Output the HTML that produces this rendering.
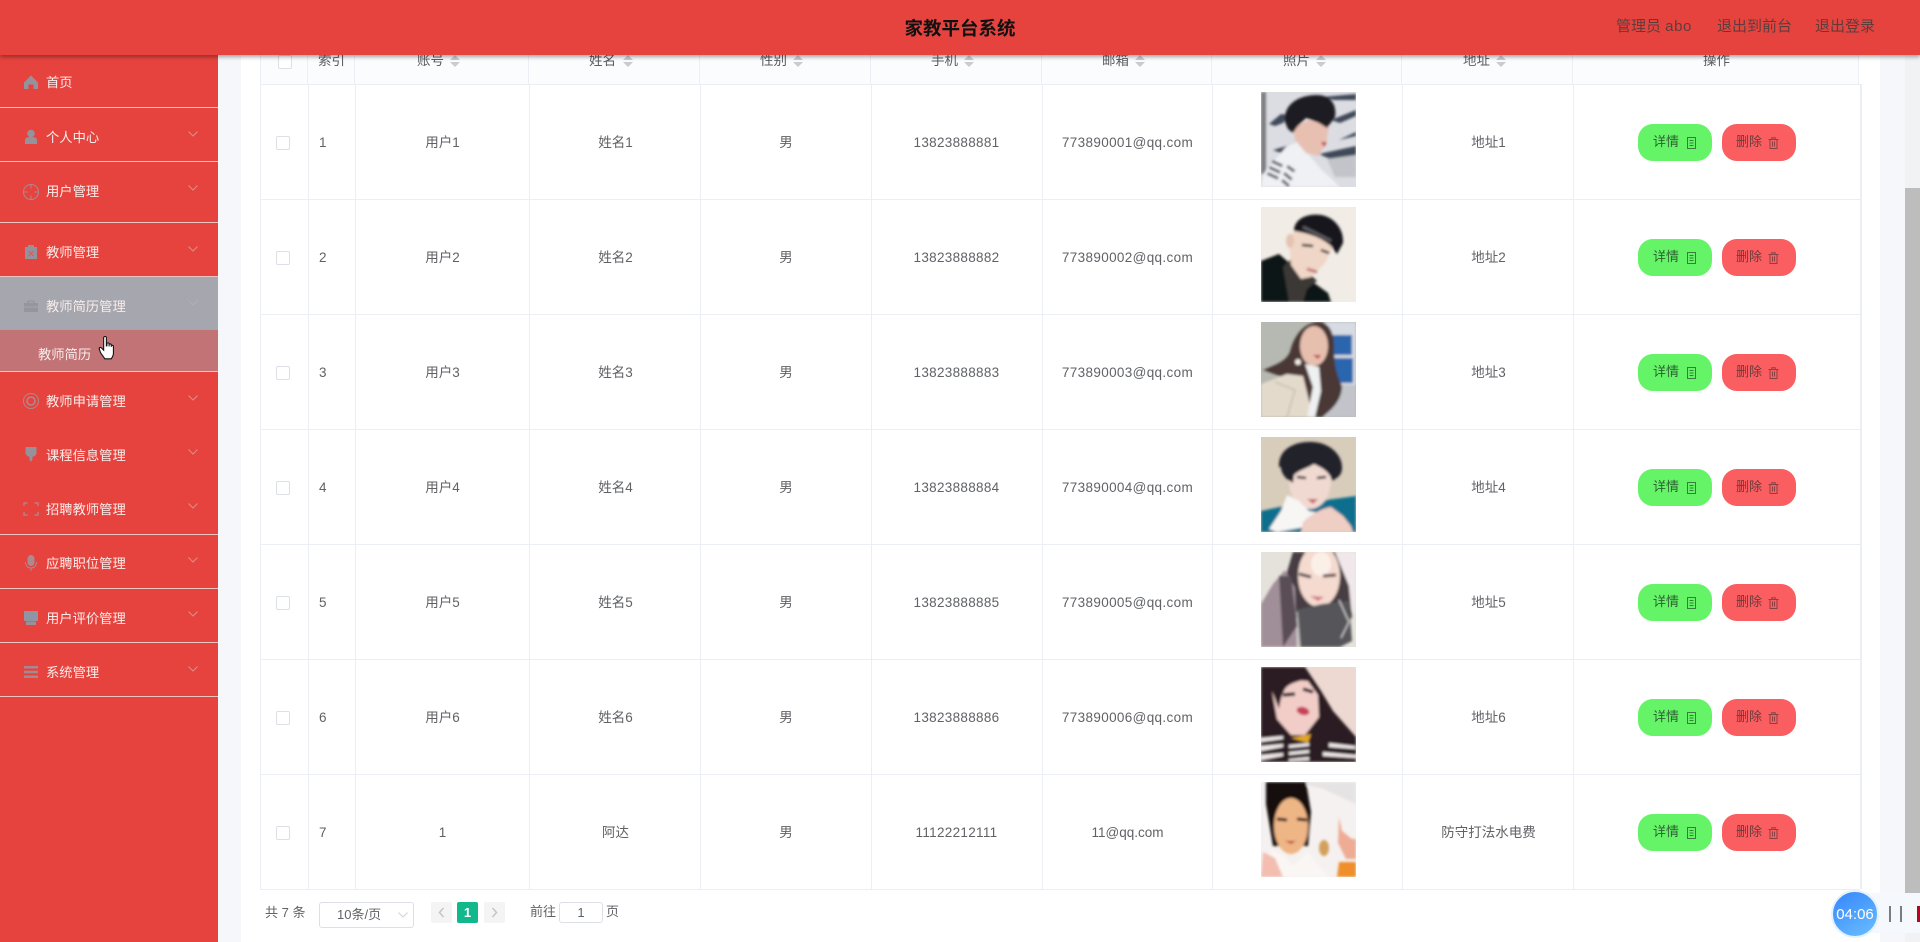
<!DOCTYPE html>
<html lang="zh"><head><meta charset="utf-8"><title>家教平台系统</title>
<style>
*{box-sizing:border-box}
html,body{margin:0;padding:0;width:1920px;height:942px;overflow:hidden;background:#f5f7fa;font-family:"Liberation Sans","Noto Sans CJK SC",sans-serif;font-size:13.5px;color:#606266}
.abs,.hl,.vl,.m,.cv,.r,.c,.th,.ck,.b,.ph,.pg{position:absolute}
#hd{position:absolute;left:0;top:0;width:1920px;height:55px;background:#e7433e;box-shadow:0 2px 4px rgba(0,0,0,.35);z-index:10}
#hd .t{position:absolute;left:760px;width:400px;top:15px;line-height:28px;text-align:center;font-size:18.5px;font-weight:bold;color:#111}
#hd a{position:absolute;top:16px;line-height:22px;font-size:15px;color:#5f3c3c;white-space:nowrap}
#sb{position:absolute;left:0;top:55px;width:218px;height:887px;background:#e7433e;z-index:5}
.m{left:46px;margin-top:1px;font-size:13.3px;line-height:20px;color:#f8ecea;white-space:nowrap}
.sl{position:absolute;left:0;width:218px;height:1px;background:#ecc4c0}
.cv{left:188px;margin-top:-1px;width:10px;height:6px}
.ic{position:absolute;left:23px;width:16px;height:16px}
#main{position:absolute;left:241px;top:0;width:1639px;height:942px;background:#fff}
.hl{left:260px;width:1600px;height:1px;background:#ebeef5}
.vl{width:1px;top:84px;height:805px;background:#ebeef5}
.th{top:49px;line-height:24px;white-space:nowrap;color:#5a5c61;font-size:13.5px}
.r{left:260px;width:1600px;height:114px}
.c{top:0;height:114px;line-height:115px;text-align:center;white-space:nowrap}
.n{letter-spacing:.3px}
.ck{width:14px;height:14px;border:1px solid #dcdfe6;border-radius:2px;background:#fff}
.ph{left:1001px;top:7px;width:95px;height:95px;display:block}
.b{top:38px;margin-top:1px;width:74px;height:37px;border-radius:15px;line-height:36px;font-size:13px;padding-left:15px;white-space:nowrap}
.g{left:1378px;background-color:#65f467;color:#2e5f35}
.d{left:1462px;background-color:#fa5e60;color:#6d3a3c;padding-left:14px}
.b svg{position:absolute;top:13px;width:11px;height:12px;opacity:.8}
.g svg{left:48px}.d svg{left:46px}
.pg{font-size:13px;line-height:20px;color:#606266;white-space:nowrap}
.pb{position:absolute;top:902px;width:21px;height:21px;background:#f4f4f5;border-radius:2px}
</style></head><body>
<svg width="0" height="0" style="position:absolute">
<defs>
<filter id="bl" x="-5%" y="-5%" width="110%" height="110%"><feGaussianBlur stdDeviation="1.3"/></filter>
<symbol id="doc" viewBox="0 0 11 12"><g fill="none" stroke="currentColor" stroke-width="1"><rect x="1.500" y=".5" width="8" height="11"/><path d="M3.500 3.500h4M3.500 6h4M3.500 8.500h4"/></g></symbol>
<symbol id="del" viewBox="0 0 11 12"><g fill="none" stroke="currentColor" stroke-width="1"><path d="M.5 2.500h10M3.800 2.500V.7h3.400v1.800M2 2.500v9h7v-9M4.500 4.500v5M6.500 4.500v5"/></g></symbol>
<symbol id="chev" viewBox="0 0 10 6"><path d="M.5.5L5 5 9.500.5" fill="none" stroke="#d98e88" stroke-width="1"/></symbol>
<symbol id="srt" viewBox="0 0 10 12"><path d="M5 0l5 5H0zM0 7h10l-5 5z" fill="#c8cbd2"/></symbol>
</defs></svg>

<div id="main"></div>

<!-- table header -->
<div class="abs" style="left:260px;top:55px;width:1598px;height:29px;background:#fbfcfd"></div>
<div class="hl" style="top:84px"></div>
<div class="vl" style="left:260px;top:55px;height:834px"></div>
<div class="vl" style="left:307px;top:55px;height:29px"></div>
<div class="vl" style="left:354px;top:55px;height:29px"></div>
<div class="vl" style="left:528px;top:55px;height:29px"></div>
<div class="vl" style="left:699px;top:55px;height:29px"></div>
<div class="vl" style="left:870px;top:55px;height:29px"></div>
<div class="vl" style="left:1041px;top:55px;height:29px"></div>
<div class="vl" style="left:1211px;top:55px;height:29px"></div>
<div class="vl" style="left:1401px;top:55px;height:29px"></div>
<div class="vl" style="left:1572px;top:55px;height:29px"></div>
<div class="vl" style="left:1858px;top:55px;height:29px"></div>
<div class="vl" style="left:308px"></div><div class="vl" style="left:355px"></div><div class="vl" style="left:529px"></div><div class="vl" style="left:700px"></div><div class="vl" style="left:871px"></div><div class="vl" style="left:1042px"></div><div class="vl" style="left:1212px"></div><div class="vl" style="left:1402px"></div><div class="vl" style="left:1573px"></div><div class="vl" style="left:1860px;width:2px"></div>
<div class="hl" style="top:199px"></div><div class="hl" style="top:314px"></div><div class="hl" style="top:429px"></div><div class="hl" style="top:544px"></div><div class="hl" style="top:659px"></div><div class="hl" style="top:774px"></div><div class="hl" style="top:889px"></div>

<div class="ck" style="left:278px;top:55px"></div>
<div class="th" style="left:318px">索引</div>
<div class="th" style="left:417px">账号</div><svg class="abs" style="left:450px;top:55px" width="10" height="12"><use href="#srt"/></svg>
<div class="th" style="left:589px">姓名</div><svg class="abs" style="left:623px;top:55px" width="10" height="12"><use href="#srt"/></svg>
<div class="th" style="left:760px">性别</div><svg class="abs" style="left:793px;top:55px" width="10" height="12"><use href="#srt"/></svg>
<div class="th" style="left:931px">手机</div><svg class="abs" style="left:964px;top:55px" width="10" height="12"><use href="#srt"/></svg>
<div class="th" style="left:1102px">邮箱</div><svg class="abs" style="left:1135px;top:55px" width="10" height="12"><use href="#srt"/></svg>
<div class="th" style="left:1283px">照片</div><svg class="abs" style="left:1316px;top:55px" width="10" height="12"><use href="#srt"/></svg>
<div class="th" style="left:1463px">地址</div><svg class="abs" style="left:1496px;top:55px" width="10" height="12"><use href="#srt"/></svg>
<div class="th" style="left:1703px">操作</div>

<!-- rows -->
<div class="r" style="top:85px"><div class="ck" style="left:16px;top:51px"></div><div class="c" style="left:59px">1</div><div class="c" style="left:95px;width:175px">用户1</div><div class="c" style="left:270px;width:171px">姓名1</div><div class="c" style="left:441px;width:170px">男</div><div class="c n" style="left:611px;width:171px">13823888881</div><div class="c" style="left:782px;width:171px;letter-spacing:.35px">773890001@qq.com</div>
<svg class="ph" viewBox="0 0 95 95"><rect width="95" height="95" fill="#dcdde3"/><g filter="url(#bl)"><rect width="5" height="82" fill="#7c7d80"/><path d="M8 32l12-10 8 1-6 8-8 3zM12 58l14-4 6 2-12 5zM60 5l35-3v6l-22 0zM70 28l25-10v6l-16 7zM78 48l17-8v4zM58 62l37-8v10l-24 4z" fill="#3f4858"/><path d="M95 85H74l-8-18 29-4z" fill="#c3c4c9"/><path d="M0 95l3-14 22-26 12-5 22 26 20 19z" fill="#eff1f4"/><path d="M32 36l16-8 20 6-3 18-8 12-12-3-11-13z" fill="#e8c0b2"/><path d="M24 30C22 12 38 3 56 3c14 0 20 10 18 22l-8 11-8-5-13-5-9 9-4 6-5-4z" fill="#1e1b20"/><path d="M60 50l6 0-3 5z" fill="#c54a4a"/><g fill="#5f6169"><rect x="12" y="68" width="11" height="3" transform="rotate(25 12 68)"/><rect x="9" y="74" width="12" height="3" transform="rotate(25 9 74)"/><rect x="7" y="80" width="12" height="3" transform="rotate(25 7 80)"/><rect x="27" y="73" width="9" height="3" transform="rotate(35 27 73)"/><rect x="24" y="80" width="10" height="3" transform="rotate(40 24 80)"/><rect x="22" y="87" width="9" height="3" transform="rotate(40 22 87)"/></g></g></svg>
<div class="c" style="left:1143px;width:171px">地址1</div><div class="b g">详情<svg><use href="#doc"/></svg></div><div class="b d">删除<svg><use href="#del"/></svg></div></div>

<div class="r" style="top:200px"><div class="ck" style="left:16px;top:51px"></div><div class="c" style="left:59px">2</div><div class="c" style="left:95px;width:175px">用户2</div><div class="c" style="left:270px;width:171px">姓名2</div><div class="c" style="left:441px;width:170px">男</div><div class="c n" style="left:611px;width:171px">13823888882</div><div class="c" style="left:782px;width:171px;letter-spacing:.35px">773890002@qq.com</div>
<svg class="ph" viewBox="0 0 95 95"><rect width="95" height="95" fill="#f1ece5"/><g filter="url(#bl)"><path d="M0 54l18-7 24 21 25 18 3 9H0z" fill="#111214"/><path d="M22 60l10-10 24 24-10 8-4 13H28z" fill="#3a3936"/><path d="M28 34l6-12 24 0 14 18-8 16-14 14-10 2-10-14z" fill="#efd6c6"/><ellipse cx="29" cy="34" rx="4" ry="7" fill="#e6c3b1"/><path d="M33 24C33 12 46 6 60 8c13 2 23 14 22 28l-6 11-6-8C60 30 46 26 33 24z" fill="#17171a"/><path d="M42 20l28 14" stroke="#5a5a60" stroke-width="3"/><path d="M41 38l11 1M60 43l8 3" stroke="#2b2424" stroke-width="2.500"/><path d="M46 62l10 3" stroke="#c07a70" stroke-width="3"/></g></svg>
<div class="c" style="left:1143px;width:171px">地址2</div><div class="b g">详情<svg><use href="#doc"/></svg></div><div class="b d">删除<svg><use href="#del"/></svg></div></div>

<div class="r" style="top:315px"><div class="ck" style="left:16px;top:51px"></div><div class="c" style="left:59px">3</div><div class="c" style="left:95px;width:175px">用户3</div><div class="c" style="left:270px;width:171px">姓名3</div><div class="c" style="left:441px;width:170px">男</div><div class="c n" style="left:611px;width:171px">13823888883</div><div class="c" style="left:782px;width:171px;letter-spacing:.35px">773890003@qq.com</div>
<svg class="ph" viewBox="0 0 95 95"><rect width="95" height="95" fill="#b5b9b1"/><g filter="url(#bl)"><rect x="64" width="31" height="95" fill="#d7dbe3"/><rect x="72" y="13" width="19" height="20" fill="#2a66ad"/><rect x="72" y="36" width="20" height="25" fill="#2a66ad"/><rect x="64" y="63" width="31" height="32" fill="#c2c4ca"/><path d="M2 48c14-6 22-8 27-18 3-14 13-30 29-30 12 0 16 16 15 26 0 14 2 26 8 38 0 14-10 24-20 31H40L30 58z" fill="#483836"/><ellipse cx="53" cy="24" rx="14" ry="20" fill="#e6bfae"/><path d="M52 33l8 0-3 4z" fill="#bf3b3c"/><path d="M0 62l26-10 16 2 10 41H0z" fill="#e4dacb"/><path d="M14 60l20 8-8 27" stroke="#cfc5b4" stroke-width="2" fill="none"/><path d="M44 42l14 3 2 24-6 26H46l6-30z" fill="#eef0f1"/><circle cx="37" cy="40" r="3" fill="#f4ece4"/></g></svg>
<div class="c" style="left:1143px;width:171px">地址3</div><div class="b g">详情<svg><use href="#doc"/></svg></div><div class="b d">删除<svg><use href="#del"/></svg></div></div>

<div class="r" style="top:430px"><div class="ck" style="left:16px;top:51px"></div><div class="c" style="left:59px">4</div><div class="c" style="left:95px;width:175px">用户4</div><div class="c" style="left:270px;width:171px">姓名4</div><div class="c" style="left:441px;width:170px">男</div><div class="c n" style="left:611px;width:171px">13823888884</div><div class="c" style="left:782px;width:171px;letter-spacing:.35px">773890004@qq.com</div>
<svg class="ph" viewBox="0 0 95 95"><rect width="95" height="95" fill="#d8ccbb"/><g filter="url(#bl)"><path d="M0 74l28-6 67-9v36H0z" fill="#0c6e8d"/><ellipse cx="49" cy="44" rx="21" ry="28" fill="#f0d9d1"/><path d="M26 58l12 6 10 10 10 2-8 13-34 6-8-3 12-18z" fill="#f7f6f5"/><path d="M18 30C17 12 34 4 52 5c18 1 30 14 29 27-1 8-6 9-10 12-2-10-12-14-18-17-6 4-15 6-20 11l-1 8-6-4c-3-3-6-7-6-12z" fill="#202129"/><path d="M36 40l9 1M56 41l9-1" stroke="#3a2a2a" stroke-width="2.500"/><path d="M46 62l11 0-5 5z" fill="#c96b6e"/><path d="M42 85c8-8 20-14 28-15l12 9 8 10 2 6H40z" fill="#efcec4"/></g></svg>
<div class="c" style="left:1143px;width:171px">地址4</div><div class="b g">详情<svg><use href="#doc"/></svg></div><div class="b d">删除<svg><use href="#del"/></svg></div></div>

<div class="r" style="top:545px"><div class="ck" style="left:16px;top:51px"></div><div class="c" style="left:59px">5</div><div class="c" style="left:95px;width:175px">用户5</div><div class="c" style="left:270px;width:171px">姓名5</div><div class="c" style="left:441px;width:170px">男</div><div class="c n" style="left:611px;width:171px">13823888885</div><div class="c" style="left:782px;width:171px;letter-spacing:.35px">773890005@qq.com</div>
<svg class="ph" viewBox="0 0 95 95"><rect width="95" height="95" fill="#e4e2da"/><g filter="url(#bl)"><path d="M70 0h25v62l-10-10-5-26z" fill="#f0e8ea"/><path d="M32 0h42l14 34 3 32H30L20 40z" fill="#473c42"/><path d="M0 95V52l12-20 12-14 10 18 2 59z" fill="#a08e99"/><path d="M18 24l12 0 6 50-14 21z" fill="#5a4e56"/><ellipse cx="58" cy="24" rx="21" ry="31" fill="#f4dacf"/><ellipse cx="60" cy="12" rx="10" ry="12" fill="#fbf0e8"/><path d="M38 22l12 3M62 24l13-1" stroke="#5a4a4a" stroke-width="3"/><path d="M49 44l14 1-6 4z" fill="#d57882"/><path d="M35 58l26-6 27-3 3 40-12 6H38z" fill="#56565a"/><path d="M78 48l10 22-8 16" stroke="#e8e8e8" stroke-width="1" fill="none"/><path d="M36 60l3 35" stroke="#d8d8d8" stroke-width="1"/></g></svg>
<div class="c" style="left:1143px;width:171px">地址5</div><div class="b g">详情<svg><use href="#doc"/></svg></div><div class="b d">删除<svg><use href="#del"/></svg></div></div>

<div class="r" style="top:660px"><div class="ck" style="left:16px;top:51px"></div><div class="c" style="left:59px">6</div><div class="c" style="left:95px;width:175px">用户6</div><div class="c" style="left:270px;width:171px">姓名6</div><div class="c" style="left:441px;width:170px">男</div><div class="c n" style="left:611px;width:171px">13823888886</div><div class="c" style="left:782px;width:171px;letter-spacing:.35px">773890006@qq.com</div>
<svg class="ph" viewBox="0 0 95 95"><rect width="95" height="95" fill="#edd9d2"/><g filter="url(#bl)"><path d="M0 0h44l16 24 12 20 23 26v25H0z" fill="#2b1a20"/><path d="M11 24l10-12 26 2 10 14 1 22-14 18-14 0-14-16z" fill="#f2cdc8"/><path d="M11 24C18 6 34 2 46 12c-8 2-18 4-22 10-3 5-5 12-6 20z" fill="#2b1a20"/><path d="M22 28l12-1M42 22l10 3" stroke="#2b1a20" stroke-width="3.500"/><ellipse cx="42" cy="44" rx="6.500" ry="4" fill="#c7405a" transform="rotate(15 42 44)"/><path d="M30 71l20-4-3 9z" fill="#e3a726"/><g fill="#f2ecec"><path d="M0 71l22-2v3L0 75zM0 79l22-2v3L0 84zM0 88l22-2v3L0 93zM28 78l20-2v3l-20 2zM28 85l20-2v3l-20 2zM28 92l20-2v3l-20 1zM68 76l26 3v3l-26-2zM62 85l33 3v3l-33-2z"/></g></g></svg>
<div class="c" style="left:1143px;width:171px">地址6</div><div class="b g">详情<svg><use href="#doc"/></svg></div><div class="b d">删除<svg><use href="#del"/></svg></div></div>

<div class="r" style="top:775px"><div class="ck" style="left:16px;top:51px"></div><div class="c" style="left:59px">7</div><div class="c" style="left:95px;width:175px">1</div><div class="c" style="left:270px;width:171px">阿达</div><div class="c" style="left:441px;width:170px">男</div><div class="c n" style="left:611px;width:171px">11122212111</div><div class="c" style="left:782px;width:171px">11@qq.com</div>
<svg class="ph" viewBox="0 0 95 95"><rect width="95" height="95" fill="#f5f1f0"/><g filter="url(#bl)"><path d="M30 0h65v22L60 6z" fill="#e6e3e4"/><path d="M5 0h40l5 30-3 34H12L5 22z" fill="#120e10"/><ellipse cx="30" cy="44" rx="17" ry="28" fill="#eeb585"/><path d="M16 37l10 1M36 37l10 1" stroke="#2a1414" stroke-width="3"/><path d="M24 59l11 0-5 3z" fill="#c3384a"/><path d="M10 68l14 6 8 10 14-14 22 25H8z" fill="#faf6f3"/><path d="M2 70l12 6 8 19H0z" fill="#f3bdb0"/><ellipse cx="63" cy="66" rx="5" ry="8" fill="#d3a05c"/><path d="M78 35l3 14 10 8 4 0v20H85l-8-16z" fill="#eeac94"/><path d="M78 80h17v15H76z" fill="#ee8f2c"/></g></svg>
<div class="c" style="left:1143px;width:171px">防守打法水电费</div><div class="b g">详情<svg><use href="#doc"/></svg></div><div class="b d">删除<svg><use href="#del"/></svg></div></div>

<!-- pagination -->
<div class="pg" style="left:265px;top:903px">共 7 条</div>
<div class="abs" style="left:319px;top:902px;width:95px;height:26px;border:1px solid #dcdfe6;border-radius:3px;background:#fff"></div>
<div class="pg" style="left:337px;top:905px;color:#606266">10条/页</div>
<svg class="abs" style="left:398px;top:912px" width="10" height="6"><path d="M.5.5L5 5 9.500.5" fill="none" stroke="#d0d3d9"/></svg>
<div class="pb" style="left:431px"><svg width="21" height="21"><path d="M12.500 6l-4 4.500 4 4.500" fill="none" stroke="#c0c4cc" stroke-width="1.500"/></svg></div>
<div class="pb" style="left:457px;background:#10b88c;color:#fff;text-align:center;font-weight:bold;font-size:13px;line-height:21px">1</div>
<div class="pb" style="left:484px"><svg width="21" height="21"><path d="M8.500 6l4 4.500-4 4.500" fill="none" stroke="#c0c4cc" stroke-width="1.500"/></svg></div>
<div class="pg" style="left:530px;top:902px">前往</div>
<div class="abs" style="left:559px;top:902px;width:44px;height:21px;border:1px solid #dcdfe6;border-radius:3px;background:#fff;text-align:center;line-height:19px;font-size:13px">1</div>
<div class="pg" style="left:606px;top:902px">页</div>

<!-- scrollbar -->
<div class="abs" style="left:1905px;top:55px;width:15px;height:887px;background:#f1f2f4"></div>
<div class="abs" style="left:1905px;top:188px;width:15px;height:710px;background:#bdbdbd"></div>

<!-- sidebar -->
<div id="sb">
<div class="abs" style="left:0;top:221px;width:218px;height:54px;background:#a6a6ae"></div>
<div class="abs" style="left:0;top:275px;width:218px;height:41px;background:#c27376"></div>
<div class="sl" style="top:52px"></div><div class="sl" style="top:106px"></div><div class="sl" style="top:167px"></div><div class="sl" style="top:221px"></div><div class="sl" style="top:316px"></div><div class="sl" style="top:479px"></div><div class="sl" style="top:533px"></div><div class="sl" style="top:587px"></div><div class="sl" style="top:641px"></div>

<div class="m" style="top:17px">首页</div>
<div class="m" style="top:72px">个人中心</div>
<div class="m" style="top:126px">用户管理</div>
<div class="m" style="top:187px">教师管理</div>
<div class="m" style="top:241px">教师简历管理</div>
<div class="m" style="left:38px;top:289px">教师简历</div>
<div class="m" style="top:336px">教师申请管理</div>
<div class="m" style="top:390px">课程信息管理</div>
<div class="m" style="top:444px">招聘教师管理</div>
<div class="m" style="top:498px">应聘职位管理</div>
<div class="m" style="top:553px">用户评价管理</div>
<div class="m" style="top:607px">系统管理</div>

<svg class="cv" style="top:77px"><use href="#chev"/></svg>
<svg class="cv" style="top:131px"><use href="#chev"/></svg>
<svg class="cv" style="top:192px"><use href="#chev"/></svg>
<svg class="cv" style="top:246px"><path d="M.5.5L5 5 9.500.5" fill="none" stroke="#b0b0b7"/></svg>
<svg class="cv" style="top:341px"><use href="#chev"/></svg>
<svg class="cv" style="top:395px"><use href="#chev"/></svg>
<svg class="cv" style="top:449px"><use href="#chev"/></svg>
<svg class="cv" style="top:503px"><use href="#chev"/></svg>
<svg class="cv" style="top:557px"><use href="#chev"/></svg>
<svg class="cv" style="top:612px"><use href="#chev"/></svg>

<!-- icons -->
<svg class="ic" style="top:19px" viewBox="0 0 16 16"><path d="M8 1.500L1 8.500v6.500h4.500v-4.500h5V15H15V8.500z" fill="#96929c"/></svg>
<svg class="ic" style="top:74px" viewBox="0 0 16 16"><circle cx="8" cy="4.500" r="3.800" fill="#96929c"/><path d="M2 15v-4c0-2 2-3 6-3s6 1 6 3v4z" fill="#96929c"/></svg>
<svg class="ic" style="left:22px;top:128px;width:18px;height:18px" viewBox="0 0 18 18"><g fill="none" stroke="#ac8a8f" stroke-width="1"><circle cx="9" cy="9" r="7.500"/><path d="M9 1.500v4M9 12.500v4M1.500 9h4M12.500 9h4"/></g></svg>
<svg class="ic" style="top:189px" viewBox="0 0 16 16"><path d="M2 3h3V1h6v2h3v12H2z" fill="#96929c"/><path d="M5.500 7l5 5M10.500 7l-5 5" stroke="#d85a55" stroke-width="1"/></svg>
<svg class="ic" style="top:243px" viewBox="0 0 16 16"><path d="M4.500 5V2.500h7V5H15v3.500H1V5zM6 3.800V5h4V3.800zM1 9.500h14V14H1z" fill="#95959f"/></svg>
<svg class="ic" style="left:22px;top:337px;width:18px;height:18px" viewBox="0 0 18 18"><g fill="none" stroke="#ac8a8f"><circle cx="9" cy="9" r="7.500" stroke-width="1"/><circle cx="9" cy="9" r="4" stroke-width="1.600"/></g></svg>
<svg class="ic" style="top:391px" viewBox="0 0 16 16"><path d="M2.500 1h11v7l-2.500 2.500-1.500 0v3L8 16l-1.500-2.500v-3H5L2.500 8z" fill="#96929c"/></svg>
<svg class="ic" style="top:446px" viewBox="0 0 16 16"><path d="M1 5V2h3.500M11.500 2H15v3M15 11v3h-3.500M4.500 14H1v-3" fill="none" stroke="#ac8a8f" stroke-width="1.300"/></svg>
<svg class="ic" style="top:499px;height:18px" viewBox="0 0 16 18"><rect x="4.500" y="1" width="7" height="11" rx="3.500" fill="#ac8a8f"/><path d="M2.500 8c0 4 2.500 6 5.500 6s5.500-2 5.500-6M8 14v3" fill="none" stroke="#ac8a8f"/></svg>
<svg class="ic" style="top:555px" viewBox="0 0 16 16"><rect x="1" y="1" width="14" height="10" rx="1" fill="#8f96a3"/><path d="M3 11.500h10V15H3z" fill="#9c8f99"/></svg>
<svg class="ic" style="top:609px" viewBox="0 0 16 16"><path d="M1 2h14v2.500H1zM1 6.800h14v2.500H1zM1 11.500h14V14H1z" fill="#a28a90"/></svg>
</div>

<!-- hand cursor -->
<svg class="abs" style="left:98px;top:335px;z-index:8" width="20" height="26" viewBox="0 0 18 24"><path d="M5 2.500c0-1.500 2.500-1.500 2.500 0V10l.5 0V8c0-1 2-1 2 0v2.500V9c0-1 2-1 2 0v2V10c0-1 2-.5 2 .5V17c0 2-1 3.500-2 5H6c-1-2-3-4-4-6l-1-3c-.5-1.500 1-2 2-1l2 2z" fill="#fff" stroke="#111" stroke-width="1"/></svg>

<!-- header -->
<div id="hd"><div class="t">家教平台系统</div><a style="left:1616px">管理员 <span style="letter-spacing:.6px">abo</span></a><a style="left:1717px">退出到前台</a><a style="left:1815px">退出登录</a></div>

<!-- timer -->
<div class="abs" style="left:1862px;top:893px;width:58px;height:40px;background:#f5f8fc;z-index:11"></div>
<div class="abs" style="left:1889px;top:906px;width:2px;height:16px;background:#7a7c80;z-index:12"></div>
<div class="abs" style="left:1900px;top:906px;width:2px;height:16px;background:#7a7c80;z-index:12"></div>
<div class="abs" style="left:1917px;top:906px;width:3px;height:16px;background:#b5061f;z-index:12"></div>
<div class="abs" style="left:1831px;top:890px;width:48px;height:48px;border-radius:50%;background:linear-gradient(150deg,#3585fa,#62b6ff 85%);border:2px solid #e3f2fd;color:#fff;font-size:15px;line-height:45px;text-align:center;z-index:13">04:06</div>
</body></html>
